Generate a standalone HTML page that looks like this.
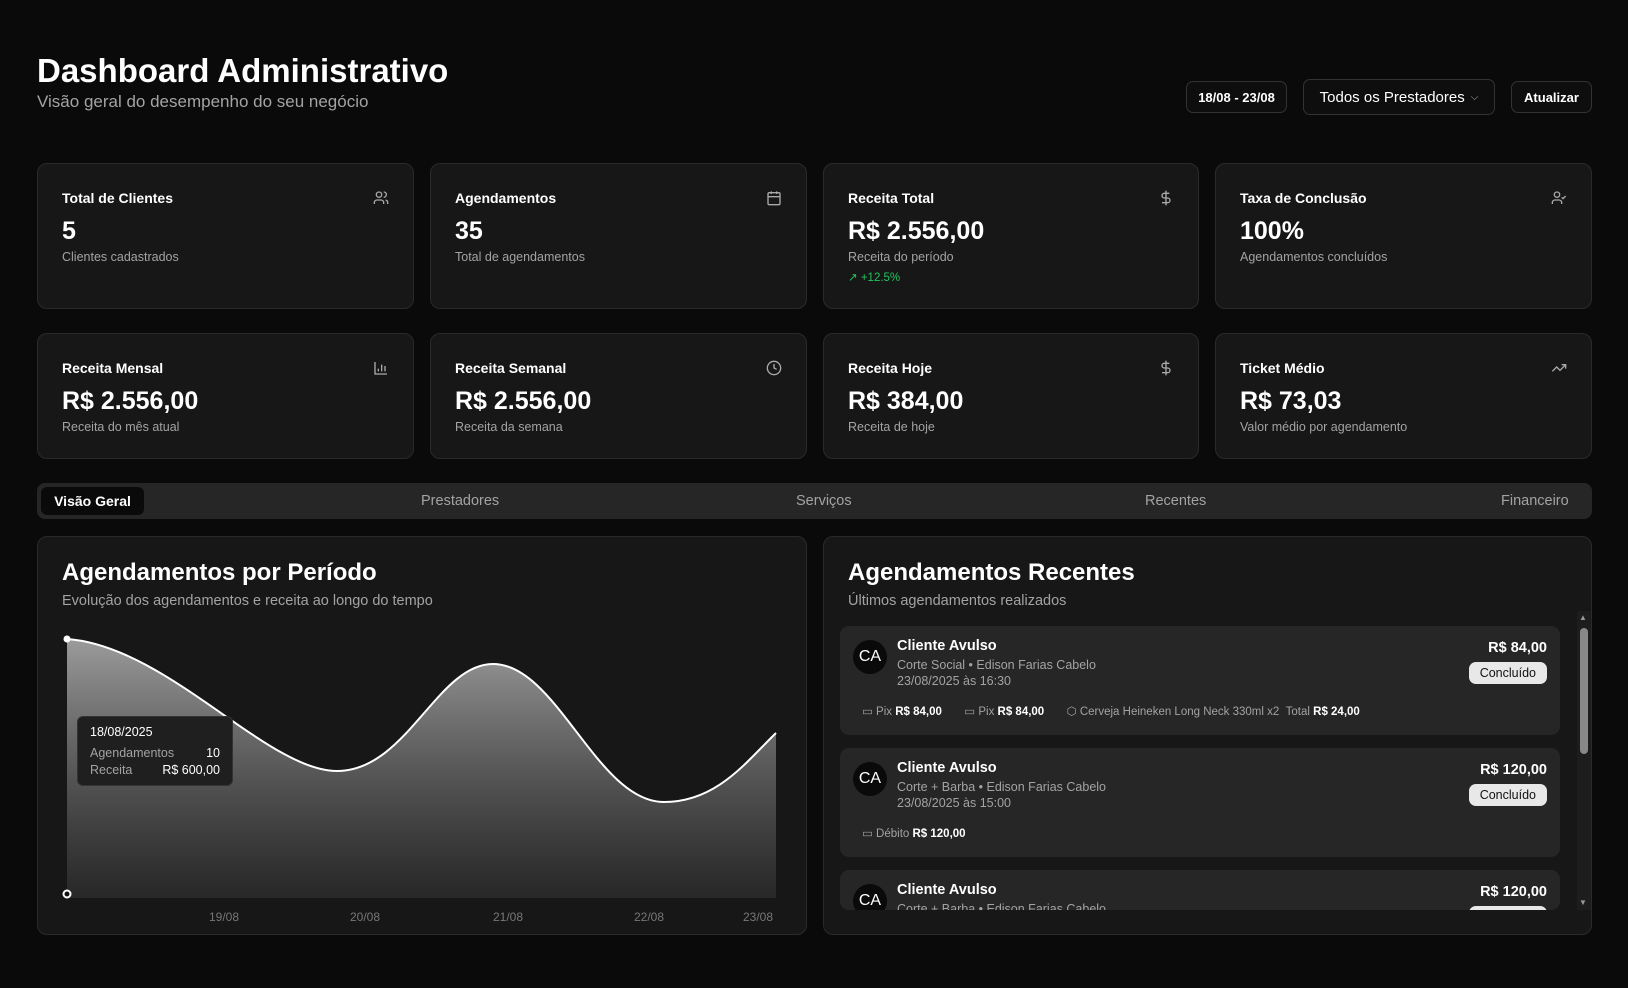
<!DOCTYPE html>
<html><head><meta charset="utf-8"><style>
*{box-sizing:border-box;margin:0;padding:0}
body{width:1628px;height:988px;background:#0a0a0b;font-family:"Liberation Sans",sans-serif;color:#fff;position:relative;overflow:hidden}
.a{position:absolute}
.btn{position:absolute;border:1px solid #333;border-radius:7px;background:#0e0e0f;font-size:13px;font-weight:bold;display:flex;align-items:center;justify-content:center}
.card{position:absolute;background:#171717;border:1px solid #2a2a2a;border-radius:10px}
.card .t{position:absolute;left:24px;top:26px;font-size:14px;font-weight:bold}
.card .v{position:absolute;left:24px;top:53px;font-size:25px;font-weight:bold}
.card .s{position:absolute;left:24px;top:86px;font-size:12.5px;color:#a3a3a3}
.card svg{position:absolute;right:24px;top:26px}
.tab{position:absolute;top:10px;font-size:14.5px;color:#a3a3a3}
.item{position:absolute;left:840px;width:720px;background:#262626;border-radius:9px;height:109px;overflow:hidden}
.av{position:absolute;left:13px;top:14px;width:34px;height:34px;border-radius:50%;background:#0a0a0a;font-size:16px;display:flex;align-items:center;justify-content:center}
.nm{position:absolute;left:57px;top:12px;font-size:14.5px;font-weight:bold}
.ln{position:absolute;left:57px;font-size:12.5px;color:#a3a3a3}
.pr{position:absolute;right:13px;top:14px;font-size:14.5px;font-weight:bold}
.bd{position:absolute;right:13px;top:36px;background:#e8e8e8;color:#111;border-radius:7px;font-size:12.5px;padding:4px 11px}
.ft{position:absolute;left:22px;top:78px;font-size:11.5px;color:#a3a3a3;white-space:nowrap}
.ft b{color:#fff}
</style></head><body>
<div class="a" style="left:37px;top:52px;font-size:33px;font-weight:bold">Dashboard Administrativo</div>
<div class="a" style="left:37px;top:92px;font-size:17px;color:#a3a3a3">Visão geral do desempenho do seu negócio</div>
<div class="btn" style="left:1186px;top:81px;width:101px;height:32px">18/08 - 23/08</div>
<div class="btn" style="left:1303px;top:79px;width:192px;height:36px;font-weight:normal;font-size:15px">Todos os Prestadores <span style="font-size:10px;margin-left:6px;color:#aaa">⌵</span></div>
<div class="btn" style="left:1511px;top:81px;width:81px;height:32px">Atualizar</div>

<div class="card" style="left:37px;top:163px;width:377px;height:146px"><div class="t">Total de Clientes</div><div class="v">5</div><div class="s">Clientes cadastrados</div><svg width="16" height="16" viewBox="0 0 24 24" fill="none" stroke="#aaa" stroke-width="2"><circle cx="9" cy="7" r="4"/><path d="M2 21v-2a4 4 0 0 1 4-4h6a4 4 0 0 1 4 4v2M16 3a4 4 0 0 1 0 8M22 21v-2a4 4 0 0 0-3-3.9"/></svg></div>
<div class="card" style="left:430px;top:163px;width:377px;height:146px"><div class="t">Agendamentos</div><div class="v">35</div><div class="s">Total de agendamentos</div><svg width="16" height="16" viewBox="0 0 24 24" fill="none" stroke="#aaa" stroke-width="2"><rect x="3" y="4" width="18" height="18" rx="2"/><path d="M16 2v4M8 2v4M3 10h18"/></svg></div>
<div class="card" style="left:823px;top:163px;width:376px;height:146px"><div class="t">Receita Total</div><div class="v">R$ 2.556,00</div><div class="s">Receita do período</div><div class="a" style="left:24px;top:106px;font-size:11.5px;color:#22c55e">↗ +12.5%</div><svg width="16" height="16" viewBox="0 0 24 24" fill="none" stroke="#aaa" stroke-width="2"><path d="M12 1v22M17 5H9.5a3.5 3.5 0 0 0 0 7h5a3.5 3.5 0 0 1 0 7H6"/></svg></div>
<div class="card" style="left:1215px;top:163px;width:377px;height:146px"><div class="t">Taxa de Conclusão</div><div class="v">100%</div><div class="s">Agendamentos concluídos</div><svg width="16" height="16" viewBox="0 0 24 24" fill="none" stroke="#aaa" stroke-width="2"><circle cx="9" cy="7" r="4"/><path d="M2 21v-2a4 4 0 0 1 4-4h6a4 4 0 0 1 4 4v2M16 11l2 2 4-4"/></svg></div>

<div class="card" style="left:37px;top:333px;width:377px;height:126px"><div class="t">Receita Mensal</div><div class="v">R$ 2.556,00</div><div class="s">Receita do mês atual</div><svg width="16" height="16" viewBox="0 0 24 24" fill="none" stroke="#aaa" stroke-width="2"><path d="M3 3v18h18M8 17v-4M13 17V7M18 17v-8"/></svg></div>
<div class="card" style="left:430px;top:333px;width:377px;height:126px"><div class="t">Receita Semanal</div><div class="v">R$ 2.556,00</div><div class="s">Receita da semana</div><svg width="16" height="16" viewBox="0 0 24 24" fill="none" stroke="#aaa" stroke-width="2"><circle cx="12" cy="12" r="10"/><path d="M12 6v6l4 2"/></svg></div>
<div class="card" style="left:823px;top:333px;width:376px;height:126px"><div class="t">Receita Hoje</div><div class="v">R$ 384,00</div><div class="s">Receita de hoje</div><svg width="16" height="16" viewBox="0 0 24 24" fill="none" stroke="#aaa" stroke-width="2"><path d="M12 1v22M17 5H9.5a3.5 3.5 0 0 0 0 7h5a3.5 3.5 0 0 1 0 7H6"/></svg></div>
<div class="card" style="left:1215px;top:333px;width:377px;height:126px"><div class="t">Ticket Médio</div><div class="v">R$ 73,03</div><div class="s">Valor médio por agendamento</div><svg width="16" height="16" viewBox="0 0 24 24" fill="none" stroke="#aaa" stroke-width="2"><path d="M22 7l-8.5 8.5-5-5L2 17M16 7h6v6"/></svg></div>

<div class="a" style="left:37px;top:483px;width:1555px;height:36px;background:#262626;border-radius:8px">
<div class="a" style="left:4px;top:4px;width:103px;height:28px;background:#0a0a0a;border-radius:6px;font-size:14px;font-weight:bold;display:flex;align-items:center;justify-content:center">Visão Geral</div>
<div class="tab" style="left:384px">Prestadores</div>
<div class="tab" style="left:759px">Serviços</div>
<div class="tab" style="left:1108px">Recentes</div>
<div class="tab" style="left:1464px">Financeiro</div>
</div>

<div class="card" style="left:37px;top:536px;width:770px;height:399px">
<div class="a" style="left:24px;top:22px;font-size:24px;font-weight:bold">Agendamentos por Período</div>
<div class="a" style="left:24px;top:56px;font-size:14.5px;color:#a3a3a3">Evolução dos agendamentos e receita ao longo do tempo</div>
</div>
<svg class="a" style="left:37px;top:536px" width="770" height="399">
<defs><linearGradient id="g" x1="0" y1="0" x2="0" y2="1"><stop offset="0" stop-color="#aaa" stop-opacity=".9"/><stop offset="1" stop-color="#333" stop-opacity=".6"/></linearGradient></defs>
<path id="c" d="M30 103 C130 110,230 235,300 235 C370 235,400 128,456 128 C520 128,560 266,627 266 C680 266,710 225,739 197 L739 362 L30 362Z" fill="url(#g)"/>
<path d="M30 103 C130 110,230 235,300 235 C370 235,400 128,456 128 C520 128,560 266,627 266 C680 266,710 225,739 197" fill="none" stroke="#fff" stroke-width="2"/>
<circle cx="30" cy="103" r="3.5" fill="#fff"/><circle cx="30" cy="358" r="3.5" fill="#111" stroke="#fff" stroke-width="2"/>
<g font-size="12" fill="#777" font-family="Liberation Sans"><text x="172" y="385">19/08</text><text x="313" y="385">20/08</text><text x="456" y="385">21/08</text><text x="597" y="385">22/08</text><text x="706" y="385">23/08</text></g>
</svg>
<div class="a" style="left:77px;top:716px;width:156px;height:70px;background:#1f1f1f;border:1px solid #333;border-radius:6px;font-size:12.5px">
<div class="a" style="left:12px;top:8px">18/08/2025</div>
<div class="a" style="left:12px;top:29px;color:#a3a3a3">Agendamentos</div><div class="a" style="right:12px;top:29px">10</div>
<div class="a" style="left:12px;top:46px;color:#a3a3a3">Receita</div><div class="a" style="right:12px;top:46px">R$ 600,00</div>
</div>

<div class="card" style="left:823px;top:536px;width:769px;height:399px">
<div class="a" style="left:24px;top:22px;font-size:24px;font-weight:bold">Agendamentos Recentes</div>
<div class="a" style="left:24px;top:56px;font-size:14.5px;color:#a3a3a3">Últimos agendamentos realizados</div>
</div>
<div class="a" style="left:1577px;top:611px;width:14px;height:299px;background:#1d1d1d"></div>
<div class="a" style="left:1580px;top:628px;width:8px;height:126px;background:#888;border-radius:4px"></div>
<div class="a" style="left:1579px;top:613px;font-size:8px;color:#999">▲</div>
<div class="a" style="left:1579px;top:898px;font-size:8px;color:#999">▼</div>

<div class="item" style="top:626px"><div class="av">CA</div><div class="nm">Cliente Avulso</div><div class="ln" style="top:32px">Corte Social • Edison Farias Cabelo</div><div class="ln" style="top:48px">23/08/2025 às 16:30</div><div class="pr">R$ 84,00</div><div class="bd">Concluído</div>
<div class="ft">▭ Pix <b>R$ 84,00</b> &nbsp;&nbsp;&nbsp;&nbsp;&nbsp; ▭ Pix <b>R$ 84,00</b> &nbsp;&nbsp;&nbsp;&nbsp;&nbsp; ⬡ Cerveja Heineken Long Neck 330ml x2 &nbsp;Total <b>R$ 24,00</b></div></div>
<div class="item" style="top:748px"><div class="av">CA</div><div class="nm">Cliente Avulso</div><div class="ln" style="top:32px">Corte + Barba • Edison Farias Cabelo</div><div class="ln" style="top:48px">23/08/2025 às 15:00</div><div class="pr">R$ 120,00</div><div class="bd">Concluído</div>
<div class="ft">▭ Débito <b>R$ 120,00</b></div></div>
<div class="item" style="top:870px;height:40px"><div class="av">CA</div><div class="nm">Cliente Avulso</div><div class="ln" style="top:32px">Corte + Barba • Edison Farias Cabelo</div><div class="pr">R$ 120,00</div><div class="bd">Concluído</div></div>
</body></html>
